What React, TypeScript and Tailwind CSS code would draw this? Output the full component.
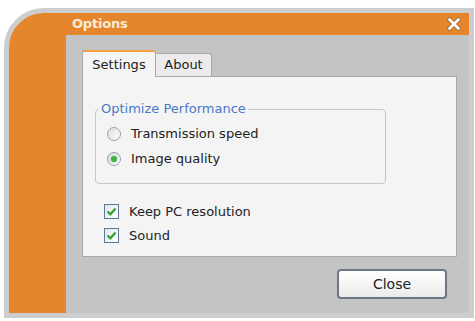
import React from 'react';

const Radio: React.FC<{ checked?: boolean }> = ({ checked }) => (
    <div className="w-[14px] h-[14px] rounded-full border border-[#8fa3b5] bg-gradient-to-br from-[#dcdcdc] to-[#ffffff] flex items-center justify-center">
        {checked && <div className="w-[6px] h-[6px] rounded-full bg-[#3fb34a] shadow-[0_0_2px_#6fd47a]" />}
    </div>
);

const Check: React.FC = () => (
    <div className="w-[15px] h-[15px] border border-[#5a7a9a] bg-gradient-to-br from-[#e4e4e4] to-[#ffffff] flex items-center justify-center">
        <svg width="11" height="11" viewBox="0 0 11 11">
            <path d="M1.5 5.5 L4.3 8.3 L9.5 2.5" fill="none" stroke="#2fa33a" strokeWidth="2.2" />
        </svg>
    </div>
);

const App: React.FC = () => {
    return (
        <div className="w-[475px] h-[321px] bg-white pt-[8px] pl-[4px]" style={{ fontFamily: '"DejaVu Sans", Verdana, sans-serif' }}>
            <div className="w-[470px] h-[310px] border-[5px] border-[#cdcdcd] rounded-tl-[40px] bg-[#e6862c] flex flex-col">
                {/* title bar */}
                <div className="h-[22px] flex items-center pl-[63px] pr-[8px] justify-between">
                    <span className="text-[13px] font-bold text-[#f8ecd6] tracking-[-0.2px]">Options</span>
                    <svg width="14" height="14" viewBox="0 0 14 14">
                        <path d="M2.5 2.5 L11.5 11.5 M11.5 2.5 L2.5 11.5" stroke="#9a6a3a" strokeWidth="4.5" strokeLinecap="round" />
                        <path d="M2.5 2.5 L11.5 11.5 M11.5 2.5 L2.5 11.5" stroke="#ffffff" strokeWidth="2.8" strokeLinecap="round" />
                    </svg>
                </div>

                <div className="flex-1 flex">
                    <div className="w-[58px]" />
                    <div className="flex-1 bg-[#c4c4c4] pt-[15px] pl-[16px] pr-[12px] flex flex-col">
                        {/* tabs */}
                        <div className="flex items-end h-[27px] relative z-10">
                            <div className="h-[27px] w-[74px] bg-[#f4f4f4] border border-b-0 border-[#a9a9a9] border-t-2 border-t-[#f0a040] rounded-t-[3px] flex items-center justify-center text-[13px] text-[#222]">
                                Settings
                            </div>
                            <div className="h-[24px] w-[56px] bg-[#ececec] border border-l-0 border-[#a9a9a9] rounded-tr-[3px] flex items-center justify-center text-[13px] text-[#222]">
                                About
                            </div>
                        </div>
                        {/* tab panel */}
                        <div className="h-[181px] -mt-[1px] bg-[#f4f4f4] border border-[#a9a9a9] pl-[12px] pt-[32px] pr-[70px]">
                            <div className="relative w-[291px] h-[75px] border border-[#c6c6c6] rounded-[4px] pt-[17px] pl-[11px] flex flex-col gap-[11px]">
                                <span className="absolute -top-[9px] left-[3px] bg-[#f4f4f4] px-[2px] text-[13px] leading-[16px] text-[#4a78c8]">
                                    Optimize Performance
                                </span>
                                <div className="flex items-center gap-[10px] text-[13px] text-[#222] leading-[14px]">
                                    <Radio />
                                    <span>Transmission speed</span>
                                </div>
                                <div className="flex items-center gap-[10px] text-[13px] text-[#222] leading-[14px]">
                                    <Radio checked />
                                    <span>Image quality</span>
                                </div>
                            </div>
                            <div className="mt-[20px] pl-[9px] flex flex-col gap-[9px]">
                                <div className="flex items-center gap-[10px] text-[13px] text-[#222] leading-[15px]">
                                    <Check />
                                    <span>Keep PC resolution</span>
                                </div>
                                <div className="flex items-center gap-[10px] text-[13px] text-[#222] leading-[15px]">
                                    <Check />
                                    <span>Sound</span>
                                </div>
                            </div>
                        </div>
                        {/* buttons */}
                        <div className="flex justify-end pr-[10px] pt-[12px]">
                            <button className="w-[110px] h-[30px] rounded-[4px] border-2 border-[#6e7684] bg-gradient-to-b from-[#ffffff] to-[#ebebeb] text-[14px] text-[#222]">
                                Close
                            </button>
                        </div>
                    </div>
                </div>
            </div>
        </div>
    );
};

export default App;
